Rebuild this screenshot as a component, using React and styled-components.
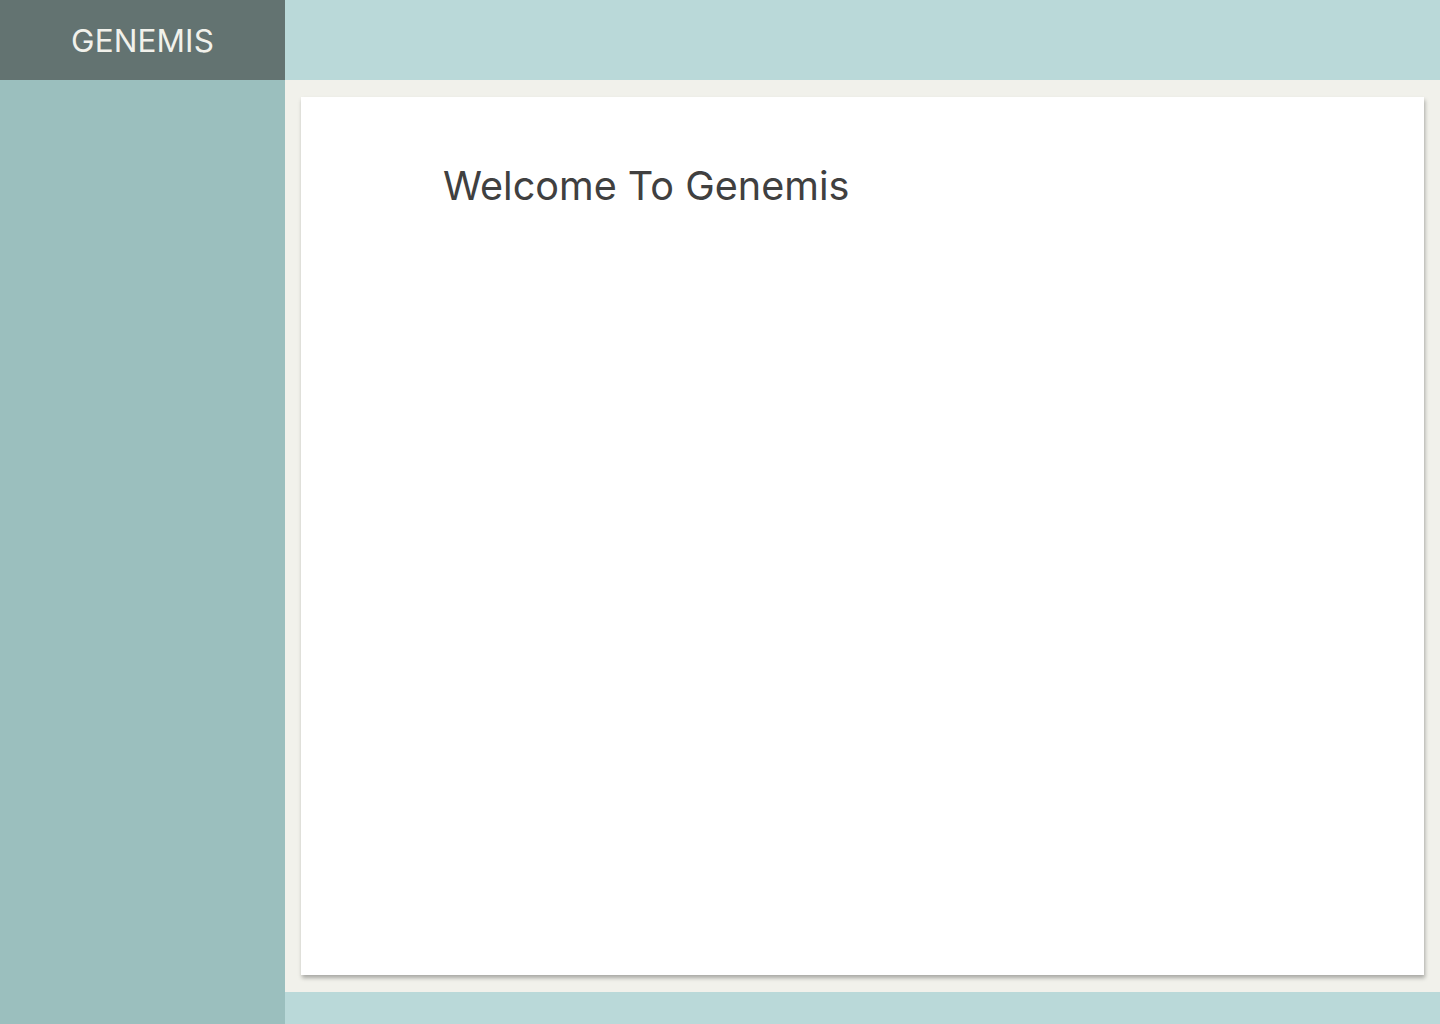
import React from "react";
import styled, { createGlobalStyle } from "styled-components";

const Global = createGlobalStyle`
  html, body { margin: 0; padding: 0; }
  body { font-family: Inter, "Noto Sans", sans-serif; }
`;

const Layout = styled.div`
  display: grid;
  grid-template-columns: 285px 1fr;
  grid-template-rows: 80px 1fr 32px;
  height: 1024px;
  width: 1440px;
`;

const Brand = styled.div`
  background: #637371;
  color: #f1f1eb;
  display: flex;
  align-items: center;
  justify-content: center;
  font-size: 31.5px;
  font-weight: 400;
  letter-spacing: 0.1px;
`;

const TopBar = styled.header`
  background: #bad9d9;
`;

const Sidebar = styled.aside`
  background: #9bbfbe;
  grid-row: 2 / 4;
`;

const Main = styled.main`
  background: #f1f1eb;
  padding: 17px 16px 17px 16px;
  display: flex;
`;

const Card = styled.section`
  flex: 1;
  background: #ffffff;
  box-shadow: 1px 3px 4px rgba(0, 0, 0, 0.3);
  padding: 59px 142px;
`;

const Title = styled.h1`
  margin: 0;
  font-size: 39.6px;
  font-weight: 400;
  color: #404040;
  line-height: 60px;
`;

const Footer = styled.footer`
  background: #bad9d9;
`;

export default function App() {
  return (
    <>
      <Global />
      <Layout>
        <Brand>GENEMIS</Brand>
        <TopBar />
        <Sidebar />
        <Main>
          <Card>
            <Title>Welcome To Genemis</Title>
          </Card>
        </Main>
        <Footer />
      </Layout>
    </>
  );
}
